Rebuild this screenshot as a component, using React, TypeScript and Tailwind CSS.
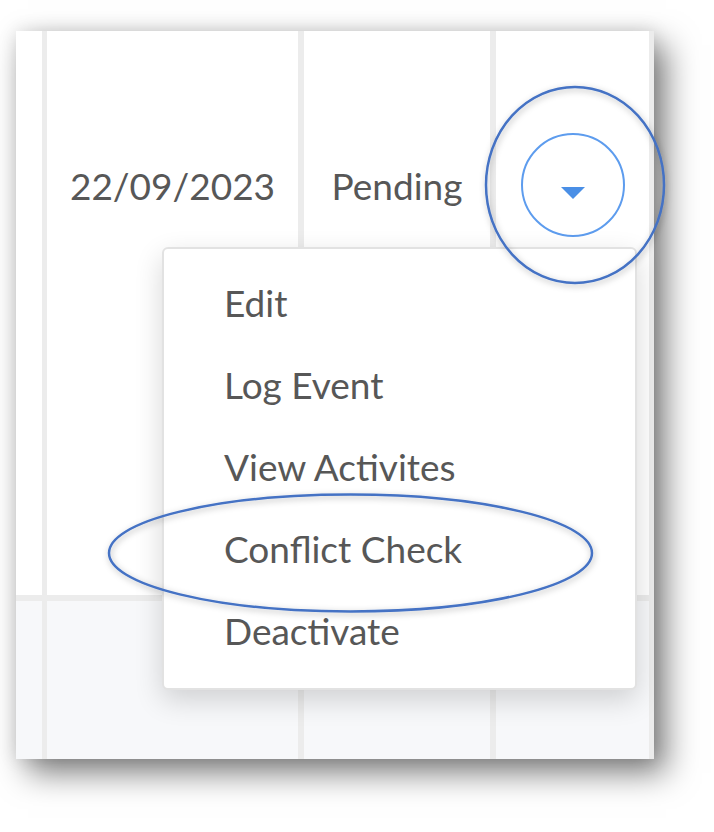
import React from "react";

const font = { fontFamily: "Lato, 'Open Sans', sans-serif" };

const items = ["Edit", "Log Event", "View Activites", "Conflict Check", "Deactivate"];

export default function App() {
  return (
    <div className="relative w-[714px] h-[832px] bg-white overflow-hidden pt-[31px] pl-[16px]" style={font}>
      <div className="relative w-[638px] h-[728px] bg-white shadow-[12px_14px_30px_rgba(0,0,0,0.5),0_0_18px_rgba(0,0,0,0.12)]">
        {/* Row 1 */}
        <div className="flex h-[564px] bg-white">
          <div className="w-[31px] border-r-[5px] border-[#ececec]" />
          <div className="w-[257px] border-r-[6px] border-[#ececec] flex justify-center">
            <div className="mt-[102px] h-[104px] flex items-center text-[37px] leading-none text-[#575757]">22/09/2023</div>
          </div>
          <div className="w-[192px] border-r-[6px] border-[#ececec] flex justify-center">
            <div className="mt-[102px] h-[104px] flex items-center text-[37px] leading-none text-[#575757]">Pending</div>
          </div>
          <div className="w-[158px] border-r-[5px] border-[#ececec] flex justify-center">
            <div className="mt-[102px] w-[104px] h-[104px] rounded-full border-2 border-[#5d9cee] flex items-center justify-center">
              <svg width="24" height="12" viewBox="0 0 24 12" className="translate-y-[8px]">
                <path d="M0 0 H24 L12 12 Z" fill="#4a8fe6" />
              </svg>
            </div>
          </div>
        </div>
        {/* Row 2 */}
        <div className="flex h-[164px] border-t-[6px] border-[#ececec] bg-[#f7f8fa]">
          <div className="w-[31px] border-r-[5px] border-[#ececec]" />
          <div className="w-[257px] border-r-[6px] border-[#ececec]" />
          <div className="w-[192px] border-r-[6px] border-[#ececec]" />
          <div className="w-[158px] border-r-[5px] border-[#ececec]" />
        </div>

        {/* Dropdown menu */}
        <div className="absolute left-[146px] top-[216px] w-[475px] h-[443px] bg-white rounded-[6px] border-2 border-[#e2e2e2] shadow-[0_10px_28px_rgba(0,0,0,0.16)] pt-[13px] pl-[60px] flex flex-col">
          {items.map((t) => (
            <div key={t} className="h-[82px] leading-[82px] text-[37px] text-[#575757] whitespace-nowrap">
              {t}
            </div>
          ))}
        </div>
      </div>

      {/* Annotation ellipses */}
      <svg className="absolute left-0 top-0 pointer-events-none" width="714" height="832" viewBox="0 0 714 832">
        <defs>
          <filter id="sh" x="-20%" y="-20%" width="140%" height="140%">
            <feDropShadow dx="1" dy="2" stdDeviation="3" floodColor="#000" floodOpacity="0.3" />
          </filter>
        </defs>
        <ellipse cx="575" cy="185" rx="89" ry="98" fill="none" stroke="#4472c4" strokeWidth="2.5" filter="url(#sh)" />
        <ellipse cx="350.5" cy="553" rx="241.5" ry="58.5" fill="none" stroke="#4472c4" strokeWidth="2.5" filter="url(#sh)" />
      </svg>
    </div>
  );
}
